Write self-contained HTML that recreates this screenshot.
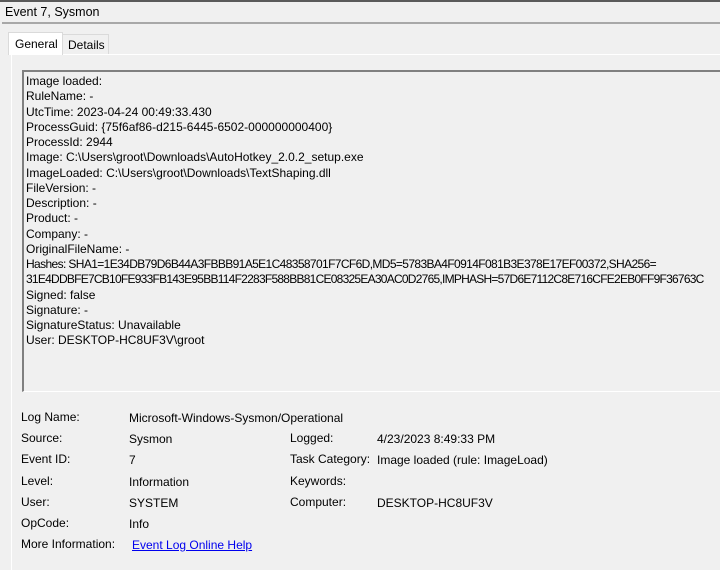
<!DOCTYPE html>
<html><head><style>
body{margin:0;width:720px;height:570px;background:#f0f0f0;font-family:"Liberation Sans",sans-serif;font-size:12px;color:#000;position:relative;overflow:hidden}
.a{position:absolute;white-space:nowrap}
</style></head><body>
<div class="a" style="left:0;top:0;width:720px;height:2px;background:#5a5a5a"></div>
<div class="a" style="left:5px;top:5px;font-size:12.5px">Event 7, Sysmon</div>
<div class="a" style="left:2px;top:22px;width:718px;height:2px;background:#a8a8a8"></div>
<div class="a" style="left:11px;top:54px;width:709px;height:1px;background:#fff"></div>
<div class="a" style="left:11px;top:54px;width:1px;height:516px;background:#fff"></div>
<div class="a" style="left:8px;top:32px;width:55px;height:23px;background:#fff;border:1px solid #dadada;border-bottom:none;box-sizing:border-box"></div>
<div class="a" style="left:15px;top:37px">General</div>
<div class="a" style="left:63px;top:34px;width:46px;height:20px;background:#f0f0f0;border:1px solid #dadada;border-bottom:none;border-left:none;box-sizing:border-box"></div>
<div class="a" style="left:68px;top:38px">Details</div>
<div class="a" style="left:22px;top:70px;width:698px;height:322px;border-top:2px solid #808080;border-left:2px solid #808080;border-bottom:1px solid #fff;box-sizing:border-box"></div>
<div class="a" style="left:26px;top:74px;line-height:15.25px;font-size:12px">Image loaded:<br>RuleName: -<br>UtcTime: 2023-04-24 00:49:33.430<br>ProcessGuid: {75f6af86-d215-6445-6502-000000000400}<br>ProcessId: 2944<br>Image: C:\Users\groot\Downloads\AutoHotkey_2.0.2_setup.exe<br>ImageLoaded: C:\Users\groot\Downloads\TextShaping.dll<br>FileVersion: -<br>Description: -<br>Product: -<br>Company: -<br>OriginalFileName: -<br><span style="letter-spacing:-0.62px">Hashes: SHA1=1E34DB79D6B44A3FBBB91A5E1C48358701F7CF6D,MD5=5783BA4F0914F081B3E378E17EF00372,SHA256=</span><br><span style="letter-spacing:-0.75px">31E4DDBFE7CB10FE933FB143E95BB114F2283F588BB81CE08325EA30AC0D2765,IMPHASH=57D6E7112C8E716CFE2EB0FF9F36763C</span><br>Signed: false<br>Signature: -<br>SignatureStatus: Unavailable<br>User: DESKTOP-HC8UF3V\groot</div>
<div class="a" style="left:21px;top:410px">Log Name:</div><div class="a" style="left:129px;top:411px">Microsoft-Windows-Sysmon/Operational</div>
<div class="a" style="left:21px;top:431px">Source:</div><div class="a" style="left:129px;top:432px">Sysmon</div>
<div class="a" style="left:21px;top:452px">Event ID:</div><div class="a" style="left:129px;top:453px">7</div>
<div class="a" style="left:21px;top:474px">Level:</div><div class="a" style="left:129px;top:475px">Information</div>
<div class="a" style="left:21px;top:495px">User:</div><div class="a" style="left:129px;top:496px">SYSTEM</div>
<div class="a" style="left:21px;top:516px">OpCode:</div><div class="a" style="left:129px;top:517px">Info</div>
<div class="a" style="left:21px;top:537px">More Information:</div><div class="a" style="left:132px;top:538px;color:#0000ee;text-decoration:underline">Event Log Online Help</div>
<div class="a" style="left:290px;top:431px">Logged:</div><div class="a" style="left:377px;top:432px">4/23/2023 8:49:33 PM</div>
<div class="a" style="left:290px;top:452px">Task Category:</div><div class="a" style="left:377px;top:453px">Image loaded (rule: ImageLoad)</div>
<div class="a" style="left:290px;top:474px">Keywords:</div>
<div class="a" style="left:290px;top:495px">Computer:</div><div class="a" style="left:377px;top:496px">DESKTOP-HC8UF3V</div>
</body></html>
